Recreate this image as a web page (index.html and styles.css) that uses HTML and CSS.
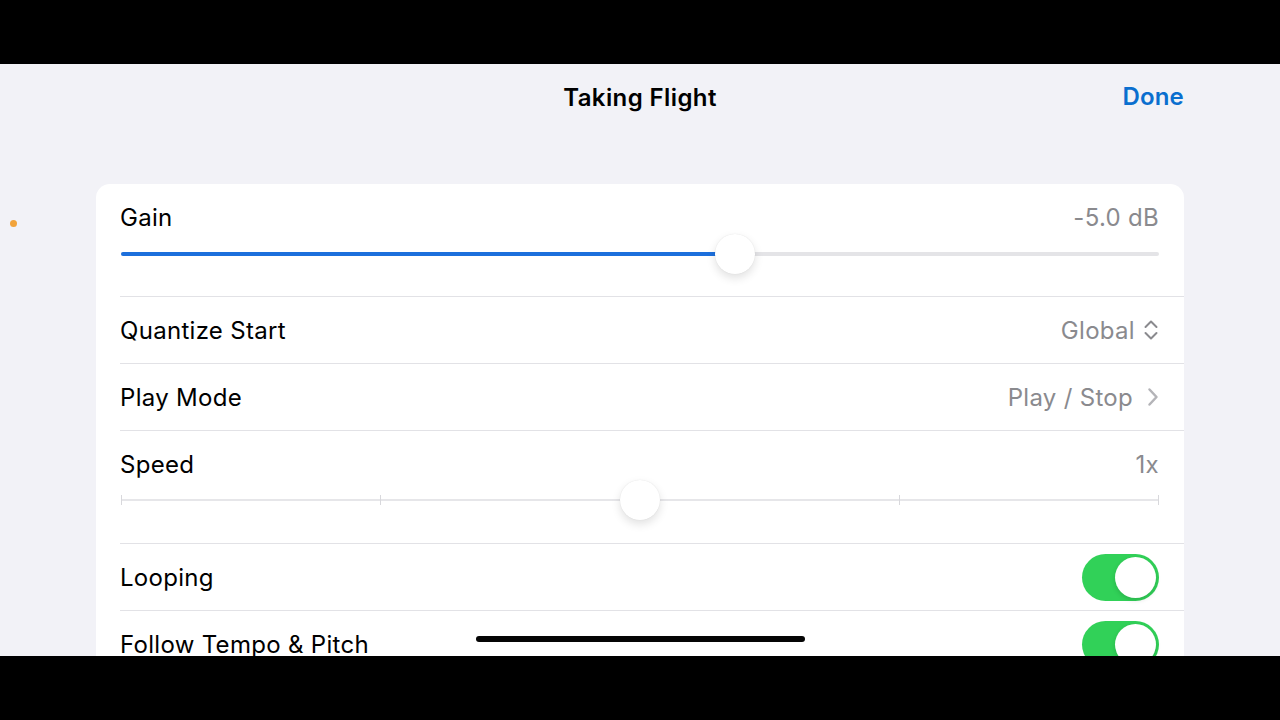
FILE: index.html
```html
<!DOCTYPE html>
<html lang="en">
<head>
    <meta charset="UTF-8">
    <meta name="viewport" content="width=device-width, initial-scale=1.0">
    <title>Taking Flight</title>
    <link rel="stylesheet" href="styles.css">
</head>
<body>
    <div class="letterbox"></div>
    <div class="screen">
        <span class="status-dot"></span>
        <header class="nav">
            <h1 class="nav-title">Taking Flight</h1>
            <a class="nav-done" href="#">Done</a>
        </header>
        <div class="card">
            <div class="row row-slider">
                <div class="row-inner">
                    <div class="row-head">
                        <span class="label">Gain</span>
                        <span class="value">-5.0 dB</span>
                    </div>
                    <div class="slider">
                        <div class="track"></div>
                        <div class="fill" style="width: 59.2%"></div>
                        <div class="thumb" style="left: 59.2%"></div>
                    </div>
                </div>
            </div>
            <div class="row">
                <div class="row-inner">
                    <span class="label">Quantize Start</span>
                    <span class="value">Global
                        <svg class="icon" width="16" height="22" viewBox="0 0 16 22"><path d="M2.5 8 L8 2.5 L13.5 8 M2.5 14 L8 19.5 L13.5 14" fill="none" stroke="#8a8a8e" stroke-width="2" stroke-linecap="round" stroke-linejoin="round"/></svg>
                    </span>
                </div>
            </div>
            <div class="row">
                <div class="row-inner">
                    <span class="label">Play Mode</span>
                    <span class="value">Play / Stop
                        <svg class="icon chevron" width="12" height="20" viewBox="0 0 12 20"><path d="M2.5 2.5 L9.5 10 L2.5 17.5" fill="none" stroke="#b4b4b8" stroke-width="2.5" stroke-linecap="round" stroke-linejoin="round"/></svg>
                    </span>
                </div>
            </div>
            <div class="row row-slider">
                <div class="row-inner">
                    <div class="row-head">
                        <span class="label">Speed</span>
                        <span class="value">1x</span>
                    </div>
                    <div class="slider slider-steps">
                        <div class="track"></div>
                        <div class="ticks">
                            <span></span><span></span><span></span><span></span><span></span>
                        </div>
                        <div class="thumb" style="left: 50%"></div>
                    </div>
                </div>
            </div>
            <div class="row">
                <div class="row-inner">
                    <span class="label">Looping</span>
                    <span class="toggle"><span class="knob"></span></span>
                </div>
            </div>
            <div class="row">
                <div class="row-inner">
                    <span class="label">Follow Tempo &amp; Pitch</span>
                    <span class="toggle"><span class="knob"></span></span>
                </div>
            </div>
        </div>
        <div class="home-bar"></div>
    </div>
    <div class="letterbox"></div>
</body>
</html>
```

FILE: styles.css
```css
body {
    margin: 0;
    padding: 0;
    background-color: #000;
    font-family: Inter, "Noto Sans", sans-serif;
    color: #000;
}
.letterbox {
    height: 64px;
    background-color: #000;
}
.screen {
    position: relative;
    height: 592px;
    overflow: hidden;
    background-color: #f2f2f7;
}
.status-dot {
    position: absolute;
    left: 10px;
    top: 156px;
    width: 7px;
    height: 7px;
    border-radius: 50%;
    background-color: #f2a33a;
}
.nav {
    height: 66px;
    display: flex;
    align-items: center;
    justify-content: center;
    position: relative;
}
.nav-title {
    margin: 0;
    font-size: 24px;
    font-weight: 600;
    letter-spacing: 0.4px;
}
.nav-done {
    position: absolute;
    right: 96px;
    top: 18px;
    font-size: 24px;
    font-weight: 600;
    letter-spacing: 0.2px;
    color: #0a6fcf;
    text-decoration: none;
}
.card {
    margin: 54px 96px 0;
    background-color: #fff;
    border-radius: 14px;
}
.row {
    padding-left: 24px;
}
.row-inner {
    height: 66px;
    padding-right: 25px;
    border-bottom: 1px solid #e2e2e6;
    display: flex;
    align-items: center;
    justify-content: space-between;
}
.row:last-child .row-inner {
    border-bottom: none;
}
.row-slider .row-inner {
    flex-direction: column;
    align-items: stretch;
    justify-content: flex-start;
    height: 112px;
}
.row-head {
    display: flex;
    justify-content: space-between;
    align-items: center;
    height: 66px;
}
.row-slider .row-head {
    height: 34px;
    margin-top: 16px;
}
.label {
    font-size: 24px;
    letter-spacing: 0.3px;
}
.value {
    font-size: 24px;
    letter-spacing: 0.3px;
    color: #8a8a8e;
    display: flex;
    align-items: center;
    gap: 8px;
}
.chevron {
    margin-left: 6px;
}
.slider {
    position: relative;
    height: 40px;
    margin: 0 0 0 1px;
}
.track {
    position: absolute;
    left: 0;
    right: 0;
    top: 18px;
    height: 4px;
    border-radius: 2px;
    background-color: #e4e4e7;
}
.fill {
    position: absolute;
    left: 0;
    top: 18px;
    height: 4px;
    border-radius: 2px;
    background-color: #1c6fdc;
}
.thumb {
    position: absolute;
    top: 0;
    width: 40px;
    height: 40px;
    margin-left: -20px;
    border-radius: 50%;
    background-color: #fff;
    box-shadow: 0 4px 10px rgba(0, 0, 0, 0.12), 0 0 1px rgba(0, 0, 0, 0.12);
}
.slider-steps {
    margin-top: -1px;
}
.slider-steps .track {
    top: 19px;
    height: 2px;
    background-color: #e6e6e9;
}
.ticks {
    position: absolute;
    left: 0;
    right: 0;
    top: 15px;
    display: flex;
    justify-content: space-between;
}
.ticks span {
    width: 1px;
    height: 10px;
    background-color: #d8d8dc;
}
.toggle {
    width: 77px;
    height: 47px;
    border-radius: 24px;
    background-color: #31d158;
    display: flex;
    align-items: center;
    justify-content: flex-end;
    padding: 0 3px;
    box-sizing: border-box;
}
.knob {
    width: 41px;
    height: 41px;
    border-radius: 50%;
    background-color: #fff;
    box-shadow: 0 2px 5px rgba(0, 0, 0, 0.15);
}
.home-bar {
    position: absolute;
    left: 476px;
    top: 572px;
    width: 329px;
    height: 6px;
    border-radius: 3px;
    background-color: #050505;
}
```
